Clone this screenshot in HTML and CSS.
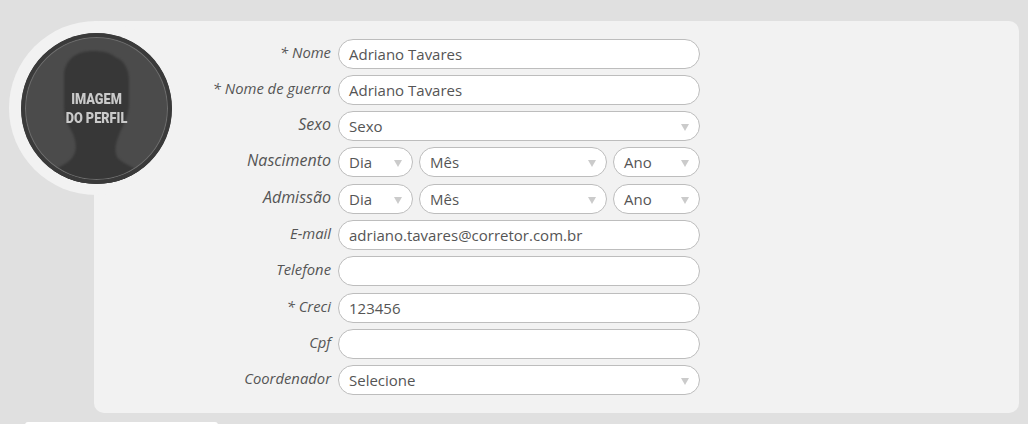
FILE: index.html
```html
<!DOCTYPE html>
<html lang="pt">
<head>
<meta charset="utf-8">
<title>Cadastro</title>
<link rel="stylesheet" href="styles.css">
</head>
<body>
<main class="panel">
  <div class="halo">
    <div class="photo">
      <svg class="silhouette" viewBox="0 0 151 151" aria-hidden="true">
        <path d="M20 151 L24 143 C34 134 47 133 53 122 C57 114 54 104 50 97 C46 90 43 84 43 72 L43 42 C44 26 56 18 72 18 C82 18 90 20 94 24 C103 27 108 36 108 48 L108 72 C107 84 103 90 100 97 C96 106 92 116 96 124 C101 131 110 132 122 141 L126 151 Z"/>
      </svg>
      <div class="photo-ring"></div>
      <div class="photo-text">IMAGEM<br>DO PERFIL</div>
    </div>
  </div>
  <form class="form">
    <div class="row"><label class="lab">* Nome</label><div class="field">Adriano Tavares</div></div>
    <div class="row"><label class="lab">* Nome de guerra</label><div class="field">Adriano Tavares</div></div>
    <div class="row"><label class="lab lab-big">Sexo</label><div class="field select">Sexo</div></div>
    <div class="row"><label class="lab lab-big">Nascimento</label>
      <div class="dates"><div class="field select">Dia</div><div class="field select">Mês</div><div class="field select">Ano</div></div></div>
    <div class="row"><label class="lab lab-big">Admissão</label>
      <div class="dates"><div class="field select">Dia</div><div class="field select">Mês</div><div class="field select">Ano</div></div></div>
    <div class="row"><label class="lab">E-mail</label><div class="field">adriano.tavares@corretor.com.br</div></div>
    <div class="row"><label class="lab">Telefone</label><div class="field"></div></div>
    <div class="row"><label class="lab">* Creci</label><div class="field">123456</div></div>
    <div class="row"><label class="lab">Cpf</label><div class="field"></div></div>
    <div class="row"><label class="lab">Coordenador</label><div class="field select">Selecione</div></div>
  </form>
</main>
<div class="next-card"></div>
</body>
</html>
```
FILE: styles.css
```css
* { box-sizing: border-box; }
html, body { margin: 0; height: 424px; overflow: hidden; }
body {
  background: #e0e0e0;
  font-family: "Open Sans", sans-serif;
  color: #555;
  padding: 21px 9px 0 94px;
}
.panel {
  position: relative;
  height: 392px;
  background: #f2f2f2;
  border-radius: 0 10px 10px 10px;
  padding: 17.6px 0 0 0;
}
.halo {
  position: absolute;
  left: -85px;
  top: 0;
  width: 174px;
  height: 174px;
  border-radius: 50%;
  background: #f2f2f2;
}
.photo {
  position: absolute;
  left: 12px;
  top: 12px;
  width: 151px;
  height: 151px;
  border-radius: 50%;
  overflow: hidden;
  background: #4b4b4b;
}
.silhouette { position: absolute; inset: 0; width: 151px; height: 151px; fill: #373737; filter: blur(.8px); }
.photo-ring {
  position: absolute;
  inset: 0;
  border-radius: 50%;
  border: 4px solid #3a3a3a;
  box-shadow: inset 0 0 0 1px #6e6e6e;
}
.photo-text {
  position: absolute;
  left: 0;
  right: 0;
  top: 57px;
  text-align: center;
  font: 900 15px/19px "Roboto", sans-serif;
  color: #cacaca;
  transform: scaleX(.85);
  filter: blur(.35px);
}
.form { display: flex; flex-direction: column; gap: 6.3px; width: 606px; }
.row { display: flex; align-items: flex-start; height: 30px; gap: 7px; }
.lab {
  width: 237px;
  text-align: right;
  font-style: italic;
  font-size: 14.8px;
  line-height: 27.4px;
  color: #555;
}
.lab-big { font-size: 16px; line-height: 26.4px; }
.field {
  flex: 1;
  height: 30px;
  min-width: 0;
  position: relative;
  background: #fff;
  border: 1px solid #bdbdbd;
  border-radius: 15px;
  padding: 0 10px;
  font-size: 15px;
  line-height: 28px;
  color: #555;
  white-space: nowrap;
}
.select::after {
  content: "";
  position: absolute;
  right: 10px;
  top: 12px;
  border-left: 4px solid transparent;
  border-right: 4px solid transparent;
  border-top: 7px solid #cbcbcb;
}
.dates { flex: 1; display: grid; grid-template-columns: 75px 188px 87px; gap: 6px; }
.next-card {
  width: 193px;
  height: 3px;
  margin: 9px 0 0 -69px;
  background: #fff;
  border-radius: 3px 3px 0 0;
}
```
